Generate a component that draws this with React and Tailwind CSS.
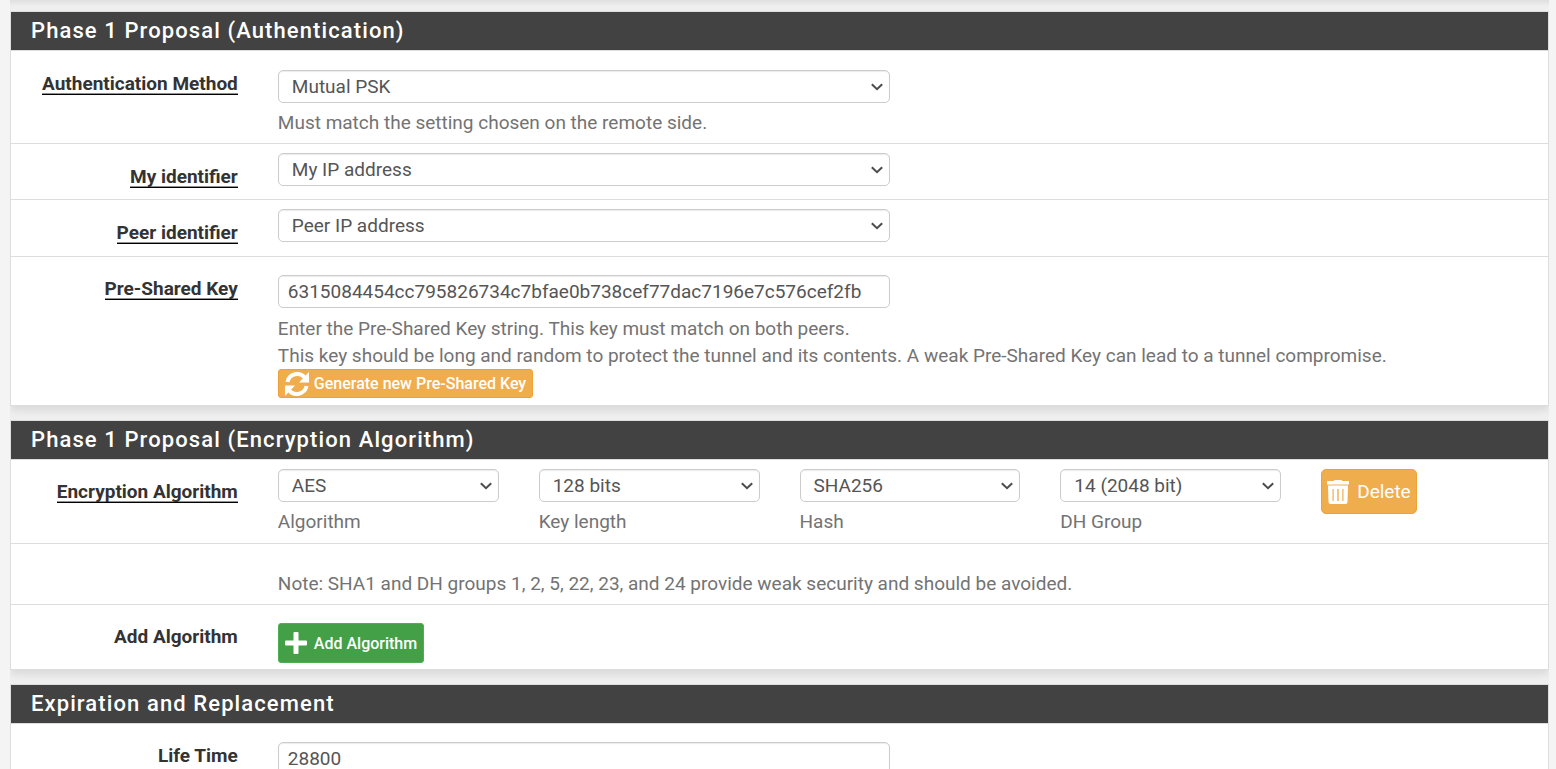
import React, { useId } from "react";

function Panel({ title, children }) {
  return (
    <section className="mb-[14px] border border-[#dddddd] bg-white shadow-[0_5px_8px_-1px_rgba(0,0,0,0.1)]">
      <h2 className="h-[38px] bg-[#424242] px-5 text-[22px] leading-[38px] font-medium tracking-wider text-white">{title}</h2>
      {children}
    </section>
  );
}

function Row({ label, htmlFor, required, pad = "py-[18px]", labelPad = "pt-1", children }) {
  return (
    <div className={`overflow-hidden border-t border-[#dddddd] ${pad}`}>
      <div className="-mx-[14px] grid grid-cols-12">
        <div className={`col-span-2 px-5 leading-5 font-bold text-[#333333] ${labelPad}`}>
          {label && (
            <label htmlFor={htmlFor} className={required ? "ml-auto block w-fit border-b border-black shadow-[inset_0_-1px_0_#909090]" : "ml-auto block w-fit"}>
              {label}
            </label>
          )}
        </div>
        {children}
      </div>
    </div>
  );
}

const field = "block h-[33px] w-full rounded-[5px] border border-[#cccccc] bg-white text-[19px] text-[#555555] shadow-[inset_0_1px_1px_rgba(0,0,0,0.08)] outline-none";

function Select({ id, value }) {
  return (
    <div className="relative">
      <select id={id} defaultValue={value} className={`${field} appearance-none pr-8 pl-[13px]`}>
        <option>{value}</option>
      </select>
      <svg aria-hidden="true" viewBox="0 0 12 8" className="pointer-events-none absolute top-[13px] right-[7px] h-2 w-3" fill="none" stroke="#4c4c4c" strokeWidth="2">
        <path d="M.8 1.2 6 6.2l5.2-5" />
      </svg>
    </div>
  );
}

function RefreshIcon() {
  return (
    <svg aria-hidden="true" viewBox="0 0 24 24" className="size-6" fill="none" stroke="currentColor" strokeWidth="4">
      <path d="M2.5 10A9.8 9.8 0 0 1 20 6M21.5 14A9.8 9.8 0 0 1 4 18" />
      <path d="M24 0v10.5H14zM0 24V13.5h10z" fill="currentColor" stroke="none" />
    </svg>
  );
}

function TrashIcon() {
  return (
    <svg aria-hidden="true" viewBox="0 0 22 24" className="h-6 w-[22px]" fill="currentColor">
      <path d="M0 1.5Q0 1 .5 1H7V.5Q7 0 7.5 0h7q.5 0 .5.5V1h6.5q.5 0 .5.5V4.5H0z" />
      <path fillRule="evenodd" d="M1 5.5h20l-.5 16.500q0 2-2 2h-15q-2 0-2-2zM5.500 9v12h1.200V9zm4.800 0v12h1.400V9zm5 0v12h1.200V9z" />
    </svg>
  );
}

function PlusIcon() {
  return (
    <svg aria-hidden="true" viewBox="0 0 22 22" className="size-[22px]" fill="currentColor">
      <path d="M9.500 0h3q1 0 1 1v7.500H21q1 0 1 1v3q0 1-1 1h-7.500V21q0 1-1 1h-3q-1 0-1-1v-7.500H1q-1 0-1-1v-3q0-1 1-1h7.500V1q0-1 1-1z" />
    </svg>
  );
}

function Algo({ id: givenId, value, label }) {
  const ownId = useId();
  const id = givenId || ownId;
  return (
    <div className="col-span-2 px-5">
      <Select id={id} value={value} />
      <label htmlFor={id} className="mt-[6px] block text-[#737373]">{label}</label>
    </div>
  );
}

export default function App() {
  return (
    <main className="h-screen overflow-hidden bg-[#f4f4f4] pr-[7px] pl-[10px] font-[Roboto,sans-serif] text-[19px] leading-[27px]">
      <div className="overflow-hidden bg-[#efefef]">
        <div className="mb-[5px] h-[6px] bg-gradient-to-b from-[#dfdfdf] to-[#efefef]" />
        <Panel title="Phase 1 Proposal (Authentication)">
          <Row label="Authentication Method" htmlFor="auth" required pad="pt-[19px] pb-[7px]">
            <div className="col-span-5 px-5">
              <Select id="auth" value="Mutual PSK" />
              <p className="mt-[6px] text-[#737373]">Must match the setting chosen on the remote side.</p>
            </div>
          </Row>
          <Row label="My identifier" htmlFor="mine" required pad="pt-[9px] pb-[11px]" labelPad="pt-[14px]">
            <div className="col-span-5 px-5"><Select id="mine" value="My IP address" /></div>
          </Row>
          <Row label="Peer identifier" htmlFor="peer" required pad="pt-[9px] pb-[12px]" labelPad="pt-[14px]">
            <div className="col-span-5 px-5"><Select id="peer" value="Peer IP address" /></div>
          </Row>
          <Row label="Pre-Shared Key" htmlFor="psk" required pad="pt-[18px] pb-[7px]">
            <div className="col-span-10">
              <div className="grid grid-cols-10">
                <div className="col-span-5 px-5">
                  <input id="psk" defaultValue="6315084454cc795826734c7bfae0b738cef77dac7196e7c576cef2fb" className={`${field} px-[9px]`} />
                </div>
              </div>
              <div className="px-5">
                <p className="mt-[7px] text-[#737373]">
                  Enter the Pre-Shared Key string. This key must match on both peers.
                  <br />
                  This key should be long and random to protect the tunnel and its contents. A weak Pre-Shared Key can lead to a tunnel compromise.
                </p>
                <button className="flex h-[29px] items-center gap-[5px] rounded-[3px] border border-[#eea236] bg-[#f0ad4e] px-[6px] text-[16px] font-medium text-white">
                  <RefreshIcon />
                  Generate new Pre-Shared Key
                </button>
              </div>
            </div>
          </Row>
        </Panel>
        <Panel title="Phase 1 Proposal (Encryption Algorithm)">
          <Row label="Encryption Algorithm" htmlFor="algo" required pad="pt-[9px] pb-[8px]" labelPad="pt-[13px]">
            <Algo id="algo" value="AES" label="Algorithm" />
            <Algo value="128 bits" label="Key length" />
            <Algo value="SHA256" label="Hash" />
            <Algo value="14 (2048 bit)" label="DH Group" />
            <div className="col-span-2 px-5">
              <button className="flex h-[45px] items-center gap-2 rounded-[5px] border border-[#eea236] bg-[#f0ad4e] px-[5px] text-white">
                <TrashIcon />
                Delete
              </button>
            </div>
          </Row>
          <Row pad="pt-[26px] pb-[7px]">
            <p className="col-span-10 px-5 text-[#737373]">Note: SHA1 and DH groups 1, 2, 5, 22, 23, and 24 provide weak security and should be avoided.</p>
          </Row>
          <Row label="Add Algorithm" htmlFor="add" pad="pt-[18px] pb-[6px]">
            <div className="col-span-10 px-5">
              <button id="add" className="flex h-10 items-center gap-[7px] rounded-[3px] border border-[#4caf50] bg-[#43a047] px-[6px] text-[16px] font-medium text-white">
                <PlusIcon />
                Add Algorithm
              </button>
            </div>
          </Row>
        </Panel>
        <Panel title="Expiration and Replacement">
          <Row label="Life Time" htmlFor="life">
            <div className="col-span-5 px-5"><input id="life" defaultValue="28800" className={`${field} px-[9px]`} /></div>
          </Row>
        </Panel>
      </div>
    </main>
  );
}
